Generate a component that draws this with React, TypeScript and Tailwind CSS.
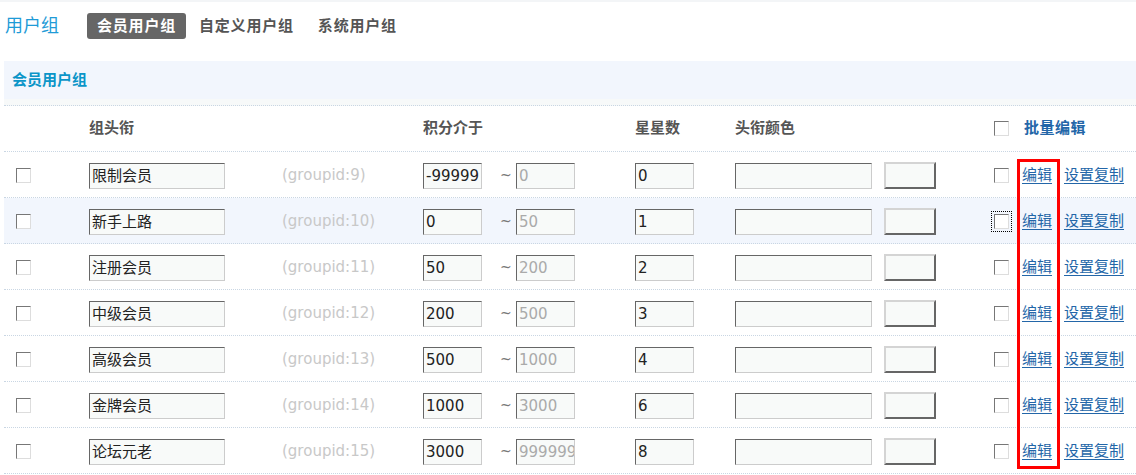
import React from 'react';

const font = { fontFamily: '"DejaVu Sans", "Noto Sans CJK SC", sans-serif' };

const rows = [
  { name: '限制会员', id: 9, min: '-99999', max: '0', stars: '0' },
  { name: '新手上路', id: 10, min: '0', max: '50', stars: '1', hover: true },
  { name: '注册会员', id: 11, min: '50', max: '200', stars: '2' },
  { name: '中级会员', id: 12, min: '200', max: '500', stars: '3' },
  { name: '高级会员', id: 13, min: '500', max: '1000', stars: '4' },
  { name: '金牌会员', id: 14, min: '1000', max: '3000', stars: '6' },
  { name: '论坛元老', id: 15, min: '3000', max: '999999', stars: '8' },
];

function Box({ focus }: { focus?: boolean }) {
  return (
    <span
      className={
        'block w-[15px] h-[15px] bg-white border border-t-[#777] border-l-[#777] border-b-[#ddd] border-r-[#ddd] ' +
        (focus ? 'outline outline-1 outline-dotted outline-black outline-offset-[2px]' : '')
      }
    />
  );
}

function Field({ value, w, muted }: { value: string; w: string; muted?: boolean }) {
  return (
    <div
      className={`${w} h-[26px] overflow-hidden whitespace-nowrap bg-[#f8faf9] border border-t-[#666] border-l-[#666] border-b-[#ccc] border-r-[#ccc] pl-[2px] text-[15px] leading-[24px] ${
        muted ? 'text-[#aaa]' : 'text-[#222]'
      }`}
    >
      {value}
    </div>
  );
}

export default function App() {
  return (
    <div className="relative w-[1136px] h-[475px] bg-white overflow-hidden" style={font}>
      <div className="h-[2px] bg-[#f3f5f7]" />
      <div className="flex items-start h-[59px] pl-[5px] pt-[11px]">
        <span className="text-[18px] leading-[26px] text-[#1f9bd7] w-[82px]">用户组</span>
        <span className="h-[26px] px-[10px] rounded-[3px] bg-[#666] text-white font-bold text-[15px] tracking-[0.8px] leading-[26px]">会员用户组</span>
        <span className="ml-[13px] text-[15px] leading-[26px] tracking-[0.8px] font-bold text-[#555]">自定义用户组</span>
        <span className="ml-[24px] text-[15px] leading-[26px] tracking-[0.8px] font-bold text-[#555]">系统用户组</span>
      </div>

      <div className="ml-[4px]">
        <div className="h-[38px] bg-[#f2f6fd] pl-[8px] flex items-center text-[15px] font-bold text-[#0b95c8]">会员用户组</div>
        <div className="h-[7px] bg-[#f7f9f9] border-b border-dotted border-[#c9d6e3]" />

        <div className="flex items-center h-[46px] border-b border-dotted border-[#c9d6e3] text-[15px] font-bold text-[#555]">
          <span className="w-[85px]" />
          <span className="w-[334px]">组头衔</span>
          <span className="w-[212px]">积分介于</span>
          <span className="w-[100px]">星星数</span>
          <span className="w-[259px]">头衔颜色</span>
          <Box />
          <span className="ml-[15px] text-[#2366a8] tracking-[0.5px]">批量编辑</span>
        </div>

        {rows.map((r) => (
          <div
            key={r.id}
            className={`flex items-center h-[46px] pt-[2px] border-b border-dotted border-[#c9d6e3] ${r.hover ? 'bg-[#f2f6fd]' : ''}`}
          >
            <span className="w-[85px] pl-[12px]">
              <Box />
            </span>
            <span className="w-[193px]">
              <Field value={r.name} w="w-[136px]" />
            </span>
            <span className="w-[141px] text-[15px] text-[#c8c8c8]">(groupid:{r.id})</span>
            <span className="w-[212px] flex items-center">
              <Field value={r.min} w="w-[59px]" />
              <span className="ml-[18px] w-[16px] text-[14px] text-[#777]">~</span>
              <Field value={r.max} w="w-[59px]" muted />
            </span>
            <span className="w-[100px]">
              <Field value={r.stars} w="w-[59px]" />
            </span>
            <span className="w-[149px]">
              <div className="w-[137px] h-[26px] bg-[#f8faf9] border border-t-[#666] border-l-[#666] border-b-[#ccc] border-r-[#ccc]" />
            </span>
            <span className="w-[110px]">
              <div className="w-[52px] h-[27px] bg-[#f8faf9] border-2 border-t-[#d4d4d4] border-l-[#d4d4d4] border-b-[#666] border-r-[#666]" />
            </span>
            <span className="w-[28px]">
              <Box focus={r.hover} />
            </span>
            <a className="w-[42px] text-[15px] text-[#2366a8] underline underline-offset-[3px]">编辑</a>
            <a className="text-[15px] text-[#2366a8] underline underline-offset-[3px]">设置复制</a>
          </div>
        ))}
      </div>

      <div className="absolute left-[1017px] top-[159px] w-[43px] h-[310px] border-[3px] border-[#f00]" />
    </div>
  );
}
